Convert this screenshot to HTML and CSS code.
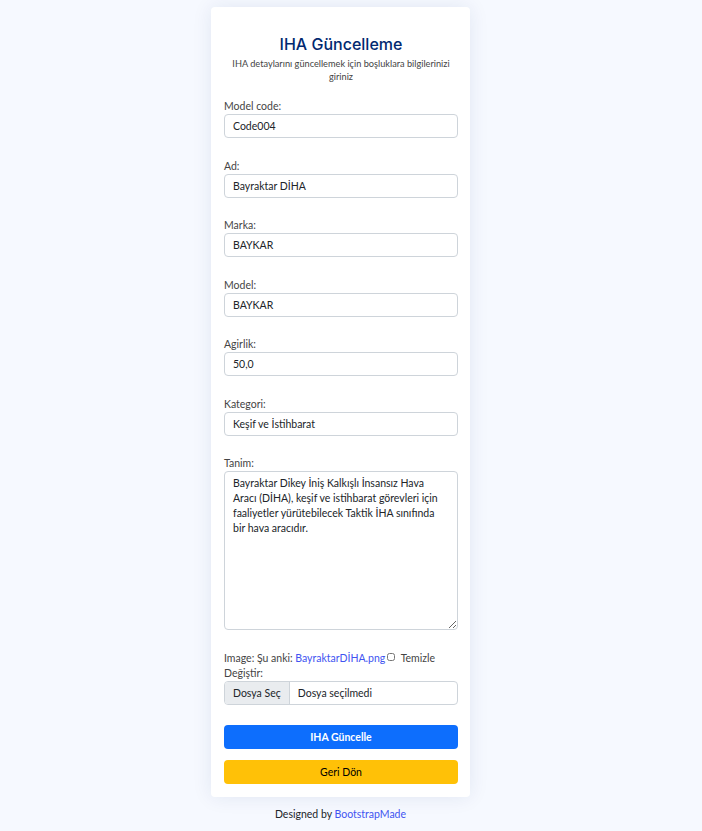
FILE: index.html
```html
<!DOCTYPE html>
<html lang="tr">
<head>
<meta charset="utf-8">
<title>IHA Güncelleme</title>
<link rel="stylesheet" href="styles.css">
</head>
<body>
<main class="page">
  <section class="card">
    <h1 class="card-title">IHA Güncelleme</h1>
    <p class="card-sub">IHA detaylarını güncellemek için boşluklara bilgilerinizi giriniz</p>
    <form class="form">
      <div class="group">
        <label class="label">Model code:</label>
        <div class="control">Code004</div>
      </div>
      <div class="group">
        <label class="label">Ad:</label>
        <div class="control">Bayraktar DİHA</div>
      </div>
      <div class="group">
        <label class="label">Marka:</label>
        <div class="control">BAYKAR</div>
      </div>
      <div class="group">
        <label class="label">Model:</label>
        <div class="control">BAYKAR</div>
      </div>
      <div class="group">
        <label class="label">Agirlik:</label>
        <div class="control">50,0</div>
      </div>
      <div class="group">
        <label class="label">Kategori:</label>
        <div class="control">Keşif ve İstihbarat</div>
      </div>
      <div class="group">
        <label class="label">Tanim:</label>
        <textarea class="control area">Bayraktar Dikey İniş Kalkışlı İnsansız Hava Aracı (DİHA), keşif ve istihbarat görevleri için faaliyetler yürütebilecek Taktik İHA sınıfında bir hava aracıdır.</textarea>
      </div>
      <div class="group image-group">
        <div class="line">Image: Şu anki: <a class="link" href="#">BayraktarDİHA.png</a><input class="check" type="checkbox"> Temizle</div>
        <div class="line">Değiştir:</div>
        <div class="file">
          <span class="file-btn">Dosya Seç</span>
          <span class="file-name">Dosya seçilmedi</span>
        </div>
      </div>
      <button type="button" class="btn btn-primary">IHA Güncelle</button>
      <button type="button" class="btn btn-warning">Geri Dön</button>
    </form>
  </section>
  <footer class="credits">Designed by <a class="credit-link" href="#">BootstrapMade</a></footer>
</main>
</body>
</html>
```
FILE: styles.css
```css
* { box-sizing: border-box; }
html, body { margin: 0; padding: 0; }
body {
  background: #f6f9ff;
  font-family: Lato, "Noto Sans", sans-serif;
  color: #444444;
}
.page {
  display: flex;
  flex-direction: column;
  align-items: center;
  padding: 7px 21px 0 0;
}
.card {
  width: 259px;
  background: #fff;
  border-radius: 4px;
  box-shadow: 0 0 20px rgba(1, 41, 112, 0.09);
  padding: 27px 12px 13px 13px;
}
.card-title {
  margin: 0;
  font-family: Inter, "Open Sans", sans-serif;
  font-weight: 500;
  font-size: 16px;
  line-height: 20px;
  text-align: center;
  color: #012970;
}
.card-sub {
  margin: 3px 0 0;
  font-size: 9.2px;
  line-height: 13px;
  text-align: center;
  color: #444;
}
.form {
  display: flex;
  flex-direction: column;
  margin-top: 16px;
}
.group { margin-bottom: 20.5px; }
.label {
  display: block;
  font-size: 10.5px;
  line-height: 15px;
  color: #444;
}
.control {
  display: block;
  width: 100%;
  height: 24px;
  border: 1px solid #ced4da;
  border-radius: 4px;
  padding: 0 8px;
  font-family: Lato, "Noto Sans", sans-serif;
  font-size: 10.5px;
  line-height: 22px;
  color: #212529;
  background: #fff;
}
.area {
  height: 159px;
  padding: 4px 8px;
  line-height: 15px;
  resize: vertical;
  margin: 0;
}
.image-group { margin-bottom: 20px; }
.line {
  font-size: 10.5px;
  line-height: 15px;
  color: #444;
  display: flex;
  align-items: center;
  white-space: pre;
}
.link { color: #4154f1; text-decoration: none; }
.check {
  width: 8px;
  height: 8px;
  margin: 0 3px 2px 2px;
}
.file {
  display: flex;
  height: 24px;
  border: 1px solid #ced4da;
  border-radius: 4px;
  overflow: hidden;
  font-size: 10.5px;
  color: #212529;
}
.file-btn {
  display: flex;
  align-items: center;
  padding: 0 8px;
  background: #e9ecef;
  border-right: 1px solid #ced4da;
}
.file-name {
  display: flex;
  align-items: center;
  padding-left: 8px;
}
.btn {
  height: 24px;
  border: none;
  border-radius: 4px;
  font-family: Lato, "Noto Sans", sans-serif;
  font-size: 10.5px;
  padding: 0;
  width: 100%;
}
.btn-primary {
  background: #0d6efd;
  color: #fff;
  font-weight: 700;
}
.btn-warning {
  background: #ffc107;
  color: #000;
  margin-top: 11px;
}
.credits {
  margin-top: 11px;
  font-size: 10.5px;
  line-height: 13px;
  color: #212529;
}
.credit-link { color: #4154f1; text-decoration: none; }
```
